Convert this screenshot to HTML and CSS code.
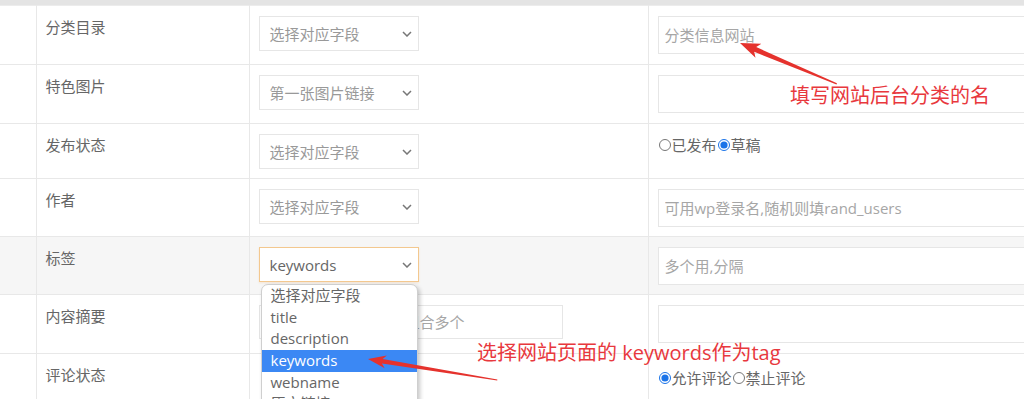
FILE: index.html
```html
<!DOCTYPE html>
<html>
<head>
    <meta charset="UTF-8">
    <title>字段映射</title>
    <link rel="stylesheet" href="styles.css">
</head>
<body>
<div class="page">
    <div class="topbar"></div>

    <table class="fields">
        <colgroup>
            <col class="c-idx">
            <col class="c-name">
            <col class="c-src">
            <col class="c-val">
        </colgroup>
        <tr>
            <td></td>
            <td class="name">分类目录</td>
            <td>
                <div class="select empty">
                    <span>选择对应字段</span>
                    <svg width="10" height="6" viewBox="0 0 10 6"><path d="M1 1 L5 5 L9 1"/></svg>
                </div>
            </td>
            <td><input class="val" type="text" placeholder="分类信息网站"></td>
        </tr>
        <tr>
            <td></td>
            <td class="name">特色图片</td>
            <td>
                <div class="select empty">
                    <span>第一张图片链接</span>
                    <svg width="10" height="6" viewBox="0 0 10 6"><path d="M1 1 L5 5 L9 1"/></svg>
                </div>
            </td>
            <td><input class="val" type="text"></td>
        </tr>
        <tr class="tight">
            <td></td>
            <td class="name">发布状态</td>
            <td>
                <div class="select empty">
                    <span>选择对应字段</span>
                    <svg width="10" height="6" viewBox="0 0 10 6"><path d="M1 1 L5 5 L9 1"/></svg>
                </div>
            </td>
            <td>
                <label class="radio"><input type="radio" name="status">已发布</label><label class="radio"><input type="radio" name="status" checked>草稿</label>
            </td>
        </tr>
        <tr class="tight">
            <td></td>
            <td class="name">作者</td>
            <td>
                <div class="select empty">
                    <span>选择对应字段</span>
                    <svg width="10" height="6" viewBox="0 0 10 6"><path d="M1 1 L5 5 L9 1"/></svg>
                </div>
            </td>
            <td><input class="val" type="text" placeholder="可用wp登录名,随机则填rand_users"></td>
        </tr>
        <tr class="tight hover">
            <td></td>
            <td class="name">标签</td>
            <td>
                <div class="select-wrap">
                    <div class="select focus">
                        <span>keywords</span>
                        <svg width="10" height="6" viewBox="0 0 10 6"><path d="M1 1 L5 5 L9 1"/></svg>
                    </div>
                    <ul class="dropdown">
                        <li>选择对应字段</li>
                        <li>title</li>
                        <li>description</li>
                        <li class="active">keywords</li>
                        <li>webname</li>
                        <li>原文链接</li>
                    </ul>
                </div>
            </td>
            <td><input class="val" type="text" placeholder="多个用,分隔"></td>
        </tr>
        <tr>
            <td></td>
            <td class="name">内容摘要</td>
            <td><input class="src-input" type="text" placeholder="选择对应的字段,可以组合多个"></td>
            <td><input class="val" type="text"></td>
        </tr>
        <tr>
            <td></td>
            <td class="name">评论状态</td>
            <td></td>
            <td class="low">
                <label class="radio"><input type="radio" name="comment" checked>允许评论</label><label class="radio"><input type="radio" name="comment">禁止评论</label>
            </td>
        </tr>
    </table>

    <div class="note note-cat">填写网站后台分类的名</div>
    <div class="note note-tag">选择网站页面的 keywords作为tag</div>

    <svg class="arrows" width="1024" height="399" viewBox="0 0 1024 399">
        <polygon transform="translate(740 43) rotate(22.9)" points="0,0 20,-7.5 16.5,-2.6 105,-0.6 105,0.6 16.5,2.6 20,7.5"/>
        <polygon transform="translate(368 359) rotate(9.25)" points="0,0 18,-6.5 14.5,-2.3 131,-0.5 131,0.5 14.5,2.3 18,6.5"/>
    </svg>
</div>
</body>
</html>
```

FILE: styles.css
```css
body {
    margin: 0;
    background-color: #fff;
    font-family: "Open Sans", "Noto Sans CJK SC", sans-serif;
    font-size: 15px;
    color: #666;
}
.page {
    position: relative;
    width: 1024px;
    height: 399px;
    overflow: hidden;
}
.topbar {
    height: 5px;
    background-color: #e4e4e4;
}

.fields {
    width: 1100px;
    table-layout: fixed;
    border-collapse: collapse;
}
.c-idx { width: 36px; }
.c-name { width: 213px; }
.c-src { width: 399px; }
.c-val { width: 452px; }

.fields td {
    border: 1px solid #e8e8e8;
    padding: 10px 9px;
    vertical-align: top;
    line-height: 22px;
}
.fields td:first-child {
    border-left: 0;
}
.fields tr:first-child td {
    border-top-color: #ececec;
}
.fields tr.tight td {
    padding-bottom: 9px;
}
.fields tr.hover td {
    background-color: #f6f6f6;
}
.fields td.low {
    padding-top: 13px;
}
.name {
    color: #666;
}

.select {
    box-sizing: border-box;
    width: 160px;
    height: 35px;
    border: 1px solid #e6e6e6;
    background-color: #fff;
    padding: 0 6px 0 10px;
    display: flex;
    align-items: center;
    justify-content: space-between;
    color: #666;
}
.select.empty {
    color: #999;
}
.select.focus {
    border-color: #f3c88f;
    box-shadow: 0 1px 2px rgba(240, 180, 110, 0.25);
}
.select svg path {
    fill: none;
    stroke: #777;
    stroke-width: 1.5;
}
.select-wrap {
    position: relative;
}
.dropdown {
    position: absolute;
    top: 37px;
    left: 2px;
    z-index: 2;
    box-sizing: border-box;
    width: 157px;
    margin: 0;
    padding: 0;
    list-style: none;
    background-color: #fff;
    border: 1px solid #cfcfcf;
    border-radius: 7px 7px 0 0;
    box-shadow: 2px 2px 4px rgba(0, 0, 0, 0.22);
}
.dropdown li {
    height: 21.7px;
    line-height: 21.7px;
    padding-left: 9px;
    color: #666;
}
.dropdown li.active {
    background-color: #3b88f4;
    color: #fff;
}

input.val, input.src-input {
    box-sizing: border-box;
    height: 38px;
    width: 440px;
    border: 1px solid #e6e6e6;
    padding: 0 6px;
    font-family: "Open Sans", "Noto Sans CJK SC", sans-serif;
    font-size: 15px;
    color: #666;
    display: block;
}
input.src-input {
    width: 304px;
    height: 34px;
}
input::placeholder {
    color: #a6a6a6;
}

.radio {
    display: inline-flex;
    align-items: center;
    color: #666;
}
.radio input {
    width: 12px;
    height: 12px;
    margin: 0 1px 0 1px;
    accent-color: #1a73e8;
}

.note {
    position: absolute;
    z-index: 3;
    color: #e8383d;
    font-size: 20px;
    line-height: 28px;
    white-space: nowrap;
}
.note-cat {
    left: 790px;
    top: 82px;
}
.note-tag {
    left: 477px;
    top: 339px;
}
.arrows {
    position: absolute;
    top: 0;
    left: 0;
    z-index: 4;
    pointer-events: none;
}
.arrows polygon {
    fill: #e5322d;
}
```
